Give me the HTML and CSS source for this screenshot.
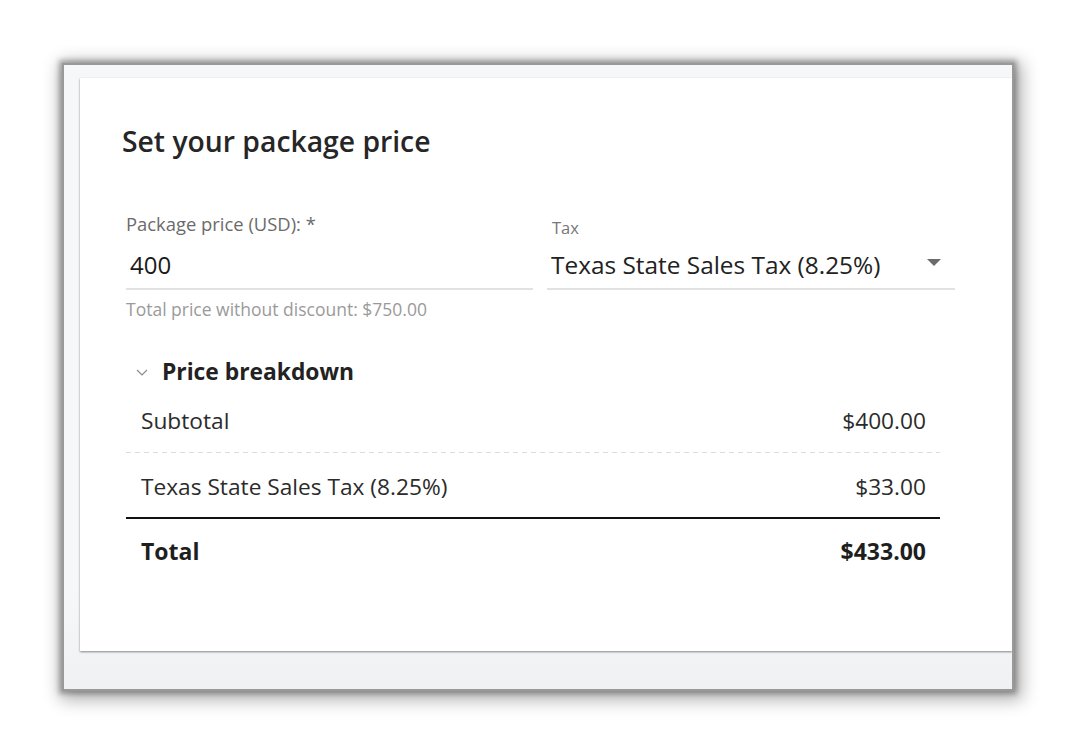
FILE: index.html
```html
<!DOCTYPE html>
<html lang="en">
<head>
  <meta charset="UTF-8">
  <meta name="viewport" content="width=device-width, initial-scale=1.0">
  <title>Set your package price</title>
  <link rel="stylesheet" href="styles.css">
</head>
<body>
  <div class="frame">
    <div class="card">
      <h2 class="card-title">Set your package price</h2>

      <div class="fields">
        <div class="field">
          <label class="field-label">Package price (USD): *</label>
          <div class="field-input">400</div>
          <div class="field-hint">Total price without discount: $750.00</div>
        </div>
        <div class="field field-tax">
          <label class="field-label">Tax</label>
          <div class="field-input field-select">
            <span>Texas State Sales Tax (8.25%)</span>
            <svg class="caret" width="14" height="7" viewBox="0 0 14 7"><path d="M0 0h14L7 7z" fill="#6b6b6b"/></svg>
          </div>
        </div>
      </div>

      <div class="breakdown">
        <div class="breakdown-head">
          <svg class="chevron" width="12" height="7" viewBox="0 0 12 7"><path d="M1 1l5 5 5-5" fill="none" stroke="#8a8a8a" stroke-width="1.2"/></svg>
          Price breakdown
        </div>
        <div class="row row-dashed">
          <span>Subtotal</span>
          <span>$400.00</span>
        </div>
        <div class="row row-line">
          <span>Texas State Sales Tax (8.25%)</span>
          <span>$33.00</span>
        </div>
        <div class="row row-total">
          <span>Total</span>
          <span>$433.00</span>
        </div>
      </div>
    </div>
  </div>
</body>
</html>
```

FILE: styles.css
```css
html {
  background-color: #fff;
}
body {
  font-family: "Open Sans", "Liberation Sans", sans-serif;
  margin: 0;
  padding: 65px 0 60px 64px;
}
.frame {
  width: 948px;
  height: 624px;
  background: linear-gradient(#f6f7f9 85%, #eff1f3);
  box-shadow: 0 0 0 2px #999, 0 0 5px 5px rgba(0, 0, 0, 0.28), 3px 4px 16px 7px rgba(0, 0, 0, 0.3);
  padding: 13px 0 0 16px;
  box-sizing: border-box;
  overflow: hidden;
}
.card {
  height: 573px;
  background-color: #fff;
  box-shadow: 0 1px 2px rgba(0, 0, 0, 0.45);
  padding: 45px 0 0 42px;
  box-sizing: border-box;
}
.card-title {
  margin: 0;
  font-size: 28.3px;
  line-height: 36px;
  font-weight: 600;
  color: #262626;
}
.fields {
  display: grid;
  grid-template-columns: 407px 408px;
  column-gap: 14px;
  margin: 53px 0 0 4px;
}
.field-label {
  display: block;
  font-size: 18.4px;
  line-height: 24px;
  color: #6b6b6b;
}
.field-tax .field-label {
  font-size: 16.5px;
  margin-top: 4px;
  padding-left: 5px;
  color: #777;
}
.field-input {
  margin-top: 12px;
  padding: 0 0 6px 4px;
  font-size: 24px;
  line-height: 34px;
  color: #1a1a1a;
  border-bottom: 2px solid #e2e2e2;
}
.field-tax .field-input {
  margin-top: 8px;
}
.field-select {
  display: flex;
  justify-content: space-between;
  align-items: center;
  padding-right: 14px;
  font-size: 24.4px;
  color: #222;
}
.caret {
  margin-top: -6px;
}
.field-hint {
  margin-top: 8px;
  font-size: 17.5px;
  line-height: 22px;
  color: #9a9a9a;
}
.breakdown {
  width: 814px;
  margin: 38px 0 0 4px;
}
.breakdown-head {
  display: flex;
  align-items: center;
  gap: 14px;
  padding-left: 10px;
  font-size: 22.8px;
  line-height: 28px;
  font-weight: 700;
  color: #222;
}
.row {
  display: flex;
  justify-content: space-between;
  padding: 17px 14px 17px 15px;
  font-size: 22.7px;
  line-height: 30px;
  color: #2b2b2b;
}
.row-dashed {
  margin-top: 3px;
  background: repeating-linear-gradient(to right, #dcdcdc 0 5px, transparent 5px 9px) bottom / 100% 1px no-repeat;
}
.row-line {
  padding-top: 19px;
  padding-bottom: 15px;
  border-bottom: 2px solid #111;
}
.row-total {
  padding-top: 17px;
  font-size: 23px;
  font-weight: 700;
  color: #1e1e1e;
}
```
